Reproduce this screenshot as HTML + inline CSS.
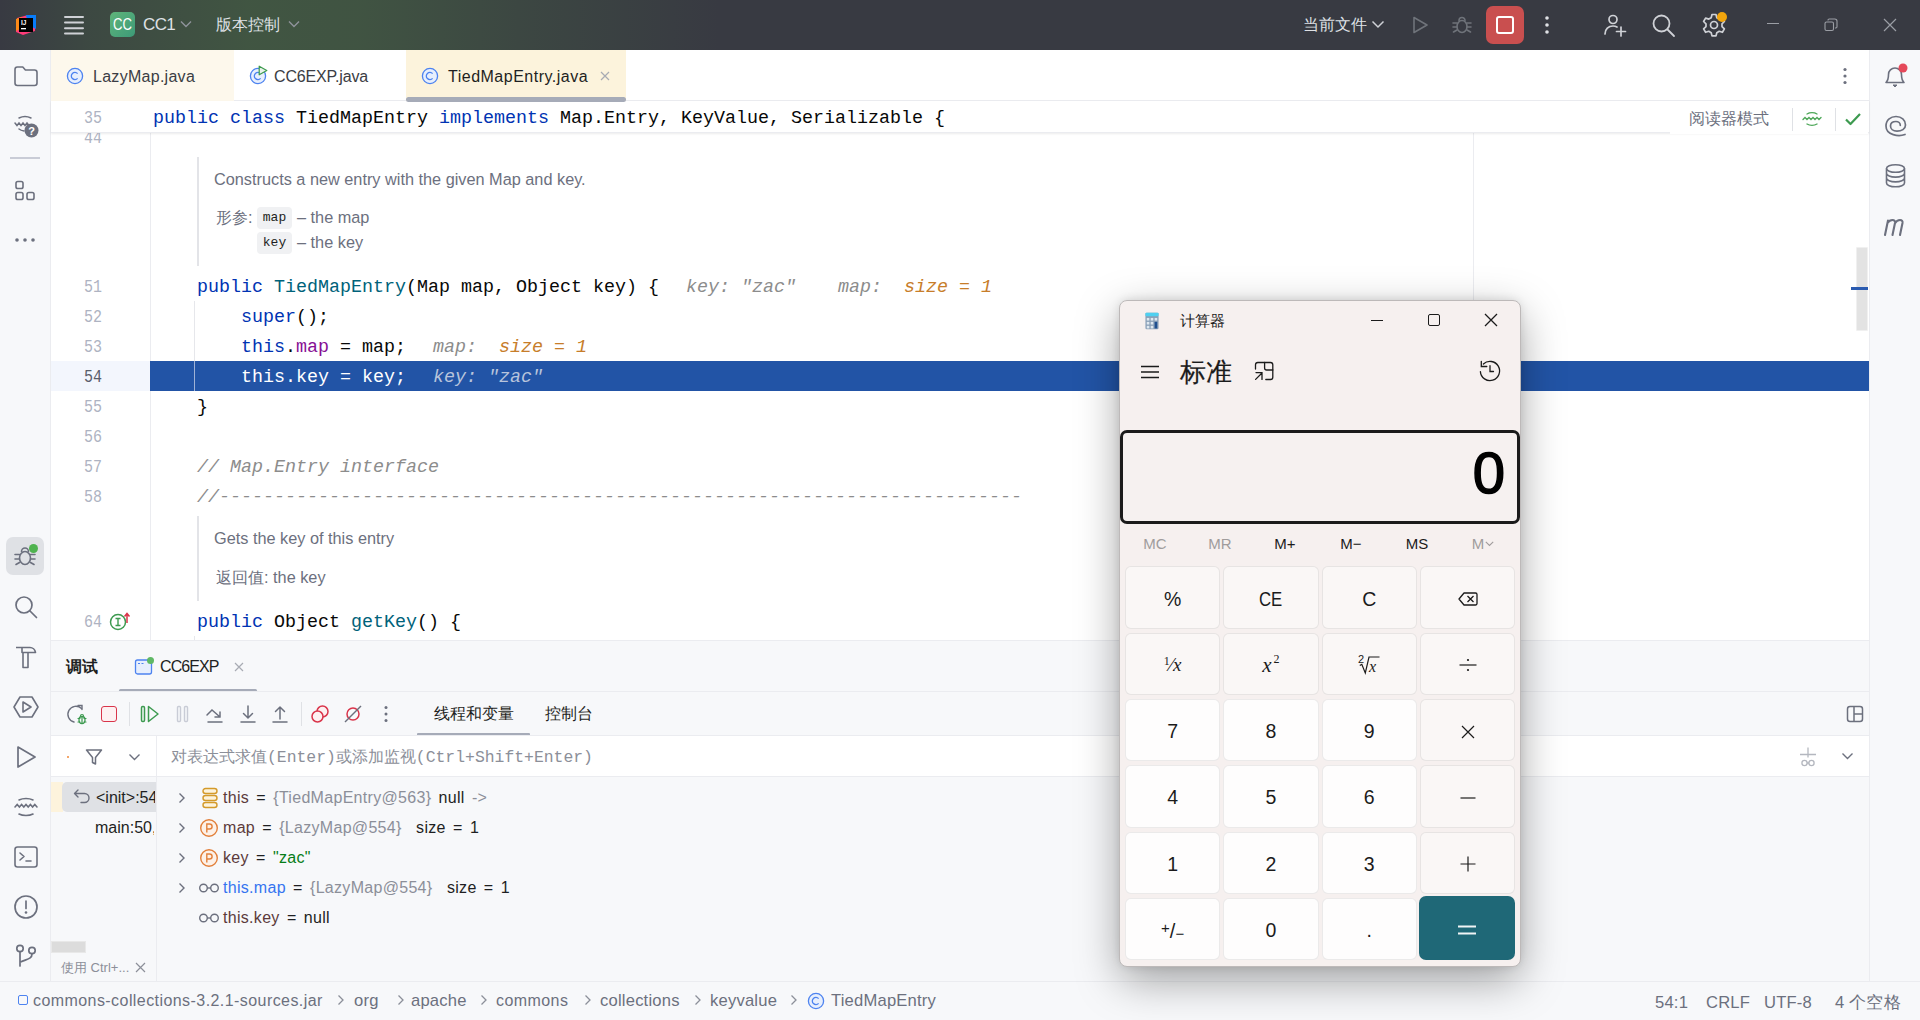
<!DOCTYPE html>
<html><head><meta charset="utf-8">
<style>
*{margin:0;padding:0;box-sizing:border-box}
html,body{width:1920px;height:1020px;overflow:hidden;background:#fff;font-family:"Liberation Sans",sans-serif;position:relative}
.a{position:absolute}
.mono{font-family:"Liberation Mono",monospace}
#title{left:0;top:0;width:1920px;height:50px;background:#383a42}
#titleglow{left:0;top:0;width:760px;height:50px;background:linear-gradient(90deg,rgba(66,90,66,0) 0px,rgba(66,90,66,0.45) 90px,rgba(66,90,66,0.85) 250px,rgba(66,90,66,0.8) 360px,rgba(66,90,66,0.4) 520px,rgba(66,90,66,0) 720px)}
#lstrip{left:0;top:50px;width:51px;height:931px;background:#f7f8fa;border-right:1px solid #ebecf0}
#rstrip{left:1869px;top:50px;width:51px;height:931px;background:#f7f8fa;border-left:1px solid #ebecf0}
#tabs{left:51px;top:50px;width:1818px;height:51px;background:#fff;border-bottom:1px solid #ebecf0}
#editor{left:51px;top:101px;width:1818px;height:539px;background:#fff;overflow:hidden}
#debug{left:51px;top:640px;width:1818px;height:341px;background:#f7f8fa;border-top:1px solid #ebecf0}
#status{left:0;top:981px;width:1920px;height:39px;background:#f7f8fa;border-top:1px solid #ebecf0}
</style></head><body>
<div id="title" class="a"></div>
<div id="titleglow" class="a"></div>

<!-- title bar content -->
<svg class="a" style="left:14px;top:13px" width="24" height="24" viewBox="0 0 24 24">
 <path d="M3 5 L14 2 L22 4 L21 18 L9 22 L2 19 Z" fill="#ff3b7a"/>
 <path d="M12 2 L22 2 L22 16 L14 12 Z" fill="#087cfa"/>
 <path d="M2 6 L8 4 L6 16 L2 18 Z" fill="#fd8b18"/>
 <rect x="5" y="5" width="14" height="14" fill="#000"/>
 <text x="7" y="12" font-size="6.5" font-weight="bold" fill="#fff" font-family="Liberation Sans">IJ</text>
 <rect x="7" y="15" width="5" height="1.3" fill="#fff"/>
</svg>
<svg class="a" style="left:63px;top:15px" width="22" height="20" viewBox="0 0 22 20"><g stroke="#cfd1d6" stroke-width="2" stroke-linecap="round"><path d="M2 2H20M2 7.6H20M2 13.2H20M2 18.6H20"/></g></svg>
<div class="a" style="left:110px;top:12px;width:25px;height:25px;border-radius:5px;background:linear-gradient(135deg,#5fb47a,#3d9a78);color:#fff;font-size:16px;line-height:25px;text-align:center;letter-spacing:0px"><span style="display:inline-block;transform:scaleX(0.82)">CC</span></div>
<div class="a" style="left:143px;top:14px;color:#dfe1e5;font-size:17px;line-height:22px;letter-spacing:-0.6px">CC1</div>
<svg class="a" style="left:180px;top:20px" width="12" height="8" viewBox="0 0 12 8"><path d="M1 1.5L6 6.5L11 1.5" stroke="#8f939b" stroke-width="1.4" fill="none"/></svg>
<div class="a" style="left:216px;top:14px;color:#dfe1e5;font-size:16px;line-height:22px">版本控制</div>
<svg class="a" style="left:288px;top:20px" width="12" height="8" viewBox="0 0 12 8"><path d="M1 1.5L6 6.5L11 1.5" stroke="#8f939b" stroke-width="1.4" fill="none"/></svg>

<div class="a" style="left:1303px;top:14px;color:#dfe1e5;font-size:16px;line-height:22px">当前文件</div>
<svg class="a" style="left:1371px;top:20px" width="14" height="9" viewBox="0 0 14 9"><path d="M1.5 1.5L7 7L12.5 1.5" stroke="#cfd1d6" stroke-width="1.5" fill="none"/></svg>
<svg class="a" style="left:1410px;top:15px" width="20" height="20" viewBox="0 0 20 20"><path d="M4 2.5L17 10L4 17.5Z" stroke="#6f737a" stroke-width="1.6" fill="none" stroke-linejoin="round"/></svg>
<svg class="a" style="left:1451px;top:14px" width="22" height="22" viewBox="0 0 22 22"><g stroke="#6f737a" stroke-width="1.6" fill="none" stroke-linecap="round"><ellipse cx="11" cy="12.5" rx="5" ry="6"/><path d="M8 6.5a3 3 0 0 1 6 0"/><path d="M2 9h4M16 9h4M2 13h4M16 13h4M2.5 18l3.5-2M19.5 18l-3.5-2"/></g></svg>
<div class="a" style="left:1486px;top:6px;width:38px;height:38px;border-radius:7px;background:#c94f4f"></div>
<div class="a" style="left:1496px;top:16px;width:18px;height:18px;border-radius:3px;border:2px solid #fff"></div>
<svg class="a" style="left:1543px;top:15px" width="8" height="20" viewBox="0 0 8 20"><g fill="#dfe1e5"><circle cx="4" cy="3" r="1.8"/><circle cx="4" cy="10" r="1.8"/><circle cx="4" cy="17" r="1.8"/></g></svg>
<svg class="a" style="left:1602px;top:12px" width="26" height="26" viewBox="0 0 26 26"><g stroke="#cfd1d6" stroke-width="1.7" fill="none" stroke-linecap="round"><circle cx="11" cy="7.5" r="4"/><path d="M3 22c0-5 3.5-8 8-8c1.5 0 2.8.3 4 1"/><path d="M19 15v9M14.5 19.5h9"/></g></svg>
<svg class="a" style="left:1651px;top:13px" width="26" height="26" viewBox="0 0 26 26"><g stroke="#cfd1d6" stroke-width="1.8" fill="none" stroke-linecap="round"><circle cx="10.5" cy="10.5" r="8"/><path d="M16.5 16.5L23 23"/></g></svg>
<svg class="a" style="left:1701px;top:12px" width="26" height="26" viewBox="0 0 26 26"><g stroke="#cfd1d6" stroke-width="1.7" fill="none" stroke-linejoin="round"><path d="M11 2.5h4l.8 3.2 2.4 1.4 3.2-1 2 3.4-2.4 2.3v2.8l2.4 2.3-2 3.4-3.2-1-2.4 1.4-.8 3.2h-4l-.8-3.2-2.4-1.4-3.2 1-2-3.4 2.4-2.3v-2.8L2.6 9.5l2-3.4 3.2 1 2.4-1.4z"/><circle cx="13" cy="13" r="3.5"/></g></svg>
<div class="a" style="left:1717px;top:12px;width:10px;height:10px;border-radius:50%;background:#f2a50c"></div>
<div class="a" style="left:1767px;top:23px;width:12px;height:1.3px;background:#9b9ea5"></div>
<svg class="a" style="left:1824px;top:18px" width="14" height="14" viewBox="0 0 14 14"><g stroke="#9b9ea5" stroke-width="1.1" fill="none"><rect x="1" y="4" width="8.5" height="8.5" rx="1.5"/><path d="M4 2.5V2.2c0-.7.5-1.2 1.2-1.2h5.6c1.2 0 2.2 1 2.2 2.2v5.6c0 .7-.5 1.2-1.2 1.2H11"/></g></svg>
<svg class="a" style="left:1883px;top:18px" width="14" height="14" viewBox="0 0 14 14"><path d="M1 1L13 13M13 1L1 13" stroke="#9b9ea5" stroke-width="1.2"/></svg>
<div id="lstrip" class="a"></div>
<div id="rstrip" class="a"></div>
<div id="tabs" class="a"></div>

<!-- tabs -->
<div class="a" style="left:51px;top:50px;width:183px;height:51px;background:#fdf8ec"></div>
<svg class="a" style="left:66px;top:67px" width="18" height="18" viewBox="0 0 18 18"><circle cx="9" cy="9" r="7.6" fill="#e7effd" stroke="#4d83f0" stroke-width="1.3"/><path d="M11.6 6.6A3.6 3.6 0 1 0 11.6 11.4" fill="none" stroke="#4d83f0" stroke-width="1.3"/></svg>
<div class="a" style="left:93px;top:66px;font-size:16px;line-height:22px;color:#3b3d44;letter-spacing:0.28px">LazyMap.java</div>
<svg class="a" style="left:249px;top:67px" width="18" height="18" viewBox="0 0 18 18"><circle cx="9" cy="9" r="7.6" fill="#e7effd" stroke="#4d83f0" stroke-width="1.3"/><path d="M11.6 6.6A3.6 3.6 0 1 0 11.6 11.4" fill="none" stroke="#4d83f0" stroke-width="1.3"/></svg>
<svg class="a" style="left:258px;top:65px" width="10" height="11" viewBox="0 0 10 11"><path d="M1.2 1.2L8.8 5.5L1.2 9.8Z" fill="#e8f2ea" stroke="#3b9a4d" stroke-width="1.2" stroke-linejoin="round"/></svg>
<div class="a" style="left:274px;top:66px;font-size:16px;line-height:22px;color:#3b3d44;letter-spacing:-0.15px">CC6EXP.java</div>
<div class="a" style="left:406px;top:50px;width:220px;height:51px;background:#fcf3dc"></div>
<div class="a" style="left:406px;top:97px;width:220px;height:5px;border-radius:3px;background:#a6abb8;z-index:5"></div>
<svg class="a" style="left:421px;top:67px" width="18" height="18" viewBox="0 0 18 18"><circle cx="9" cy="9" r="7.6" fill="#e7effd" stroke="#4d83f0" stroke-width="1.3"/><path d="M11.6 6.6A3.6 3.6 0 1 0 11.6 11.4" fill="none" stroke="#4d83f0" stroke-width="1.3"/></svg>
<div class="a" style="left:448px;top:66px;font-size:16px;line-height:22px;color:#1e1f22;letter-spacing:0.5px">TiedMapEntry.java</div>
<svg class="a" style="left:600px;top:71px" width="10" height="10" viewBox="0 0 10 10"><path d="M1 1L9 9M9 1L1 9" stroke="#a8abb3" stroke-width="1.2"/></svg>
<svg class="a" style="left:1841px;top:67px" width="8" height="18" viewBox="0 0 8 18"><g fill="#6c707e"><circle cx="4" cy="2.5" r="1.6"/><circle cx="4" cy="9" r="1.6"/><circle cx="4" cy="15.5" r="1.6"/></g></svg>
<div id="editor" class="a"></div>

<style>
.code{font-family:"Liberation Mono",monospace;font-size:18.33px;line-height:30px;white-space:pre;padding-top:2.4px}
.hint{font-style:italic}
.lnum{left:30px;width:72px;text-align:right;font-family:"Liberation Mono",monospace;font-size:18.5px;line-height:30px;padding-top:2px;transform:scaleX(0.81);transform-origin:100% 0}
.doc{font-size:16.3px;color:#6c707e;line-height:20px;white-space:pre}
.badge{background:#f0f1f3;border-radius:4px;font-family:"Liberation Mono",monospace;font-size:13px;color:#1e1f22;text-align:center;line-height:22px}
</style>
<!-- editor -->
<div class="a" style="left:150px;top:133px;width:1px;height:507px;background:#ebecf0"></div>
<div class="a" style="left:1473px;top:133px;width:1px;height:507px;background:#ebecf0"></div>
<div class="a" style="left:194px;top:301px;width:1px;height:90px;background:#e6e7eb"></div><div class="a" style="left:194px;top:636px;width:1px;height:4px;background:#e6e7eb"></div>
<div class="a lnum" style="top:122px;color:#aeb3c2">44</div><div class="a" style="left:197px;top:157px;width:2px;height:109px;background:#e3e4e8"></div><div class="a doc" style="left:214px;top:169px">Constructs a new entry with the given Map and key.</div><div class="a doc" style="left:216px;top:207px">形参:</div><div class="a badge" style="left:257px;top:207px;width:35px;height:22px">map</div><div class="a doc" style="left:297px;top:207px">– the map</div><div class="a badge" style="left:257px;top:232px;width:35px;height:22px">key</div><div class="a doc" style="left:297px;top:232px">– the key</div><div class="a lnum" style="top:271px;color:#aeb3c2">51</div><div class="a code" style="left:153px;top:271px;color:#080808;">    <span style="color:#0033b3">public</span> <span style="color:#00627a">TiedMapEntry</span>(Map map, Object key) {</div><div class="a code hint" style="left:686px;top:271px;color:#8c8c8c">key: "zac"</div><div class="a code hint" style="left:838px;top:271px;color:#8c8c8c">map:</div><div class="a code hint" style="left:904px;top:271px;color:#c77d2a">size = 1</div><div class="a lnum" style="top:301px;color:#aeb3c2">52</div><div class="a code" style="left:153px;top:301px;color:#080808;">        <span style="color:#0033b3">super</span>();</div><div class="a lnum" style="top:331px;color:#aeb3c2">53</div><div class="a code" style="left:153px;top:331px;color:#080808;">        <span style="color:#0033b3">this</span>.<span style="color:#871094">map</span> = map;</div><div class="a code hint" style="left:433px;top:331px;color:#8c8c8c">map:</div><div class="a code hint" style="left:499px;top:331px;color:#c77d2a">size = 1</div><div class="a" style="left:51px;top:361px;width:99px;height:30px;background:#f3f6fd"></div><div class="a" style="left:150px;top:361px;width:1719px;height:30px;background:#2254a6"></div><div class="a" style="left:194px;top:361px;width:1px;height:30px;background:#9fb2d6"></div><div class="a lnum" style="top:361px;color:#5a5d6b">54</div><div class="a code" style="left:153px;top:361px;color:#ffffff;">        this.key = key;</div><div class="a code hint" style="left:433px;top:361px;color:#b8c4dc">key: "zac"</div><div class="a lnum" style="top:391px;color:#aeb3c2">55</div><div class="a code" style="left:153px;top:391px;color:#080808;">    }</div><div class="a lnum" style="top:421px;color:#aeb3c2">56</div><div class="a lnum" style="top:451px;color:#aeb3c2">57</div><div class="a code" style="left:153px;top:451px;color:#8c8c8c;font-style:italic">    // Map.Entry interface</div><div class="a lnum" style="top:481px;color:#aeb3c2">58</div><div class="a code" style="left:153px;top:481px;color:#8c8c8c;font-style:italic">    //-------------------------------------------------------------------------</div><div class="a" style="left:197px;top:516px;width:2px;height:85px;background:#e3e4e8"></div><div class="a doc" style="left:214px;top:528px">Gets the key of this entry</div><div class="a doc" style="left:216px;top:567px">返回值: the key</div><div class="a lnum" style="top:606px;color:#aeb3c2">64</div><div class="a code" style="left:153px;top:606px;color:#080808;">    <span style="color:#0033b3">public</span> Object <span style="color:#00627a">getKey</span>() {</div><svg class="a" style="left:109px;top:611px" width="22" height="20" viewBox="0 0 22 20"><circle cx="9" cy="11" r="7.5" fill="none" stroke="#3d9a50" stroke-width="1.5"/><path d="M6.5 7.5h5M9 7.5v7M6.5 14.5h5" stroke="#3d9a50" stroke-width="1.4"/><path d="M18 12V3M15.5 5.5L18 2.5l2.5 3" stroke="#d9344a" stroke-width="1.5" fill="none"/></svg><div class="a" style="left:51px;top:101px;width:1818px;height:32px;background:#fff;box-shadow:0 1px 2px rgba(0,0,0,0.08);border-bottom:1px solid #ebecf0"></div><div class="a lnum" style="top:102px;color:#aeb3c2">35</div><div class="a code" style="left:153px;top:102px;color:#080808;"><span style="color:#0033b3">public</span> <span style="color:#0033b3">class</span> TiedMapEntry <span style="color:#0033b3">implements</span> Map.Entry, KeyValue, Serializable {</div><div class="a" style="left:1670px;top:104px;width:198px;height:30px;background:#fff"></div><div class="a" style="left:1689px;top:108px;font-size:16px;line-height:22px;color:#6c707e">阅读器模式</div><div class="a" style="left:1792px;top:108px;width:1px;height:23px;background:#dfe1e5"></div><svg class="a" style="left:1801px;top:108px" width="22" height="22" viewBox="0 0 22 22"><g fill="none" stroke="#4fa85a" stroke-width="1.4" stroke-linecap="round"><path d="M6 6a7 4 0 0 1 10 0"/><path d="M2 11.5l2-2 2 2 2-2 2 2 2-2 2 2 2-2 2 2 2-2"/><path d="M6 16a7 4 0 0 0 10 0"/></g></svg><div class="a" style="left:1835px;top:108px;width:1px;height:23px;background:#dfe1e5"></div><svg class="a" style="left:1844px;top:111px" width="18" height="16" viewBox="0 0 18 16"><path d="M2 8.5l4.5 4.5L16 3" fill="none" stroke="#3d9a50" stroke-width="2.2" stroke-linejoin="round"/></svg><div class="a" style="left:1856px;top:247px;width:12px;height:84px;background:#e3e3e3;border:1px solid #f0f0f0;border-radius:1px"></div><div class="a" style="left:1851px;top:287px;width:17px;height:3px;background:#2a5bb0"></div><div id="debug" class="a"></div>
<div id="status" class="a"></div>
<!-- debug panel -->
<div class="a" style="left:66px;top:656px;font-size:16px;line-height:22px;font-weight:bold;color:#1e1f22">调试</div>
<svg class="a" style="left:134px;top:656px" width="22" height="22" viewBox="0 0 22 22"><rect x="1.5" y="4" width="16" height="14" rx="2" fill="#e7effd" stroke="#4d83f0" stroke-width="1.3"/><path d="M4 7.5h2M7.5 7.5h2" stroke="#4d83f0" stroke-width="1"/><circle cx="16.5" cy="4.5" r="3.5" fill="#5fb865"/></svg>
<div class="a" style="left:160px;top:656px;font-size:16px;line-height:22px;color:#1e1f22;letter-spacing:-0.9px">CC6EXP</div>
<svg class="a" style="left:234px;top:662px" width="10" height="10" viewBox="0 0 10 10"><path d="M1 1L9 9M9 1L1 9" stroke="#a8abb3" stroke-width="1.2"/></svg>
<div class="a" style="left:119px;top:689px;width:138px;height:3px;border-radius:2px;background:#a6abb8"></div>
<div class="a" style="left:51px;top:691px;width:1818px;height:1px;background:#ebecf0"></div>
<!-- toolbar -->
<svg class="a" style="left:66px;top:704px" width="22" height="22" viewBox="0 0 22 22"><g fill="none" stroke-linecap="round"><path d="M15.5 4.5A8 8 0 1 0 8 18" stroke="#6c707e" stroke-width="1.4"/><path d="M12 1.5h4v4" stroke="#6c707e" stroke-width="1.4"/><ellipse cx="16" cy="16" rx="3" ry="3.5" stroke="#3d9a50" stroke-width="1.3"/><path d="M12 14.5h2M18 14.5h2M12 18h2M18 18h2M16 13v6M14.5 12a1.5 1.5 0 0 1 3 0" stroke="#3d9a50" stroke-width="1.2"/></g></svg>
<div class="a" style="left:101px;top:706px;width:16px;height:16px;border:1.6px solid #d9344a;border-radius:3px;background:#fdf0f1"></div>
<div class="a" style="left:129px;top:702px;width:1px;height:24px;background:#dfe1e5"></div>
<svg class="a" style="left:140px;top:705px" width="20" height="18" viewBox="0 0 20 18"><g fill="none" stroke="#3d9a50" stroke-width="1.5" stroke-linejoin="round"><rect x="1.5" y="1.5" width="3" height="15" rx="1.2"/><path d="M8.5 1.5L18 9L8.5 16.5Z"/></g></svg>
<svg class="a" style="left:176px;top:705px" width="14" height="18" viewBox="0 0 14 18"><g fill="none" stroke="#c9ccd6" stroke-width="1.4"><rect x="1.5" y="1.5" width="3" height="15" rx="1"/><rect x="8.5" y="1.5" width="3" height="15" rx="1"/></g></svg>
<svg class="a" style="left:205px;top:704px" width="20" height="20" viewBox="0 0 20 20"><g fill="none" stroke="#6c707e" stroke-width="1.5" stroke-linecap="round"><path d="M3 18h14"/><path d="M2 11L7 6L15 13M15 8v5h-5"/></g></svg>
<svg class="a" style="left:238px;top:704px" width="20" height="20" viewBox="0 0 20 20"><g fill="none" stroke="#6c707e" stroke-width="1.5" stroke-linecap="round"><path d="M3 18h14"/><path d="M10 2v12M5.5 9.5L10 14l4.5-4.5"/></g></svg>
<svg class="a" style="left:270px;top:704px" width="20" height="20" viewBox="0 0 20 20"><g fill="none" stroke="#6c707e" stroke-width="1.5" stroke-linecap="round"><path d="M3 18h14"/><path d="M10 15V3M5.5 7.5L10 3l4.5 4.5"/></g></svg>
<div class="a" style="left:301px;top:702px;width:1px;height:24px;background:#dfe1e5"></div>
<svg class="a" style="left:310px;top:704px" width="20" height="20" viewBox="0 0 20 20"><g fill="#fdf0f1" stroke="#d9344a" stroke-width="1.5"><circle cx="12.5" cy="7.5" r="5.5"/><circle cx="7.5" cy="12.5" r="5.5"/></g></svg>
<svg class="a" style="left:343px;top:704px" width="20" height="20" viewBox="0 0 20 20"><circle cx="10" cy="10" r="6" fill="none" stroke="#d9344a" stroke-width="1.5"/><path d="M2 18L18 2" stroke="#6c707e" stroke-width="1.5"/></svg>
<svg class="a" style="left:382px;top:705px" width="8" height="18" viewBox="0 0 8 18"><g fill="#6c707e"><circle cx="4" cy="2.5" r="1.5"/><circle cx="4" cy="9" r="1.5"/><circle cx="4" cy="15.5" r="1.5"/></g></svg>
<div class="a" style="left:434px;top:703px;font-size:16px;line-height:22px;color:#1e1f22">线程和变量</div>
<div class="a" style="left:545px;top:703px;font-size:16px;line-height:22px;color:#1e1f22">控制台</div>
<div class="a" style="left:417px;top:733px;width:113px;height:3px;border-radius:1px;background:#a6abb8"></div>
<svg class="a" style="left:1845px;top:704px" width="20" height="20" viewBox="0 0 20 20"><g fill="none" stroke="#6c707e" stroke-width="1.5"><rect x="2.5" y="2.5" width="15" height="15" rx="2.5"/><path d="M9 2.5v15M9 10h8.5"/></g></svg>
<div class="a" style="left:51px;top:735px;width:1818px;height:1px;background:#ebecf0"></div>
<!-- evaluate row -->
<div class="a" style="left:51px;top:736px;width:1818px;height:40px;background:#fff"></div>
<div class="a" style="left:67px;top:756px;width:2px;height:2px;border-radius:1px;background:#f08a3a"></div>
<svg class="a" style="left:84px;top:747px" width="20" height="20" viewBox="0 0 20 20"><path d="M2.5 3h15l-6 7.5V17l-3-1.5v-5z" fill="none" stroke="#6c707e" stroke-width="1.5" stroke-linejoin="round"/></svg>
<svg class="a" style="left:128px;top:753px" width="13" height="9" viewBox="0 0 13 9"><path d="M1.5 1.5L6.5 6.5L11.5 1.5" stroke="#6c707e" stroke-width="1.4" fill="none"/></svg>
<div class="a" style="left:156px;top:736px;width:1px;height:245px;background:#ebecf0"></div>
<div class="a" style="left:171px;top:746px;font-size:16px;line-height:22px;color:#8c8f99;white-space:pre">对表达式求值<span class="mono" style="font-size:16.4px">(Enter)</span>或添加监视<span class="mono" style="font-size:16.4px">(Ctrl+Shift+Enter)</span></div>
<svg class="a" style="left:1797px;top:746px" width="22" height="22" viewBox="0 0 22 22"><g fill="none" stroke="#b4b7bf" stroke-width="1.3"><path d="M11 1.5v10M3 8.5h16"/><circle cx="7.5" cy="17" r="2.6"/><circle cx="14.5" cy="17" r="2.6"/><path d="M10 17h2"/></g></svg>
<svg class="a" style="left:1841px;top:752px" width="13" height="9" viewBox="0 0 13 9"><path d="M1.5 1.5L6.5 6.5L11.5 1.5" stroke="#6c707e" stroke-width="1.4" fill="none"/></svg>
<div class="a" style="left:51px;top:776px;width:1818px;height:1px;background:#ebecf0"></div>
<!-- frames -->
<div class="a" style="left:51px;top:782px;width:12px;height:30px;background:#fdf3dc"></div>
<div class="a" style="left:62px;top:782px;width:94px;height:30px;background:#dfe1e5;border-radius:5px 0 0 5px"></div>
<svg class="a" style="left:73px;top:788px" width="18" height="16" viewBox="0 0 18 16"><path d="M5 2L1.5 5.5L5 9M1.5 5.5h10a4.5 4.5 0 0 1 0 9H8" fill="none" stroke="#6c707e" stroke-width="1.4" stroke-linecap="round" stroke-linejoin="round"/></svg>
<div class="a" style="left:96px;top:787px;width:59px;overflow:hidden;font-size:16px;line-height:22px;color:#1e1f22;white-space:pre">&lt;init&gt;:54, TiedMapEntry</div>
<div class="a" style="left:95px;top:817px;width:59px;overflow:hidden;font-size:16px;line-height:22px;color:#1e1f22;white-space:pre">main:50, CC6EXP</div>
<div class="a" style="left:51px;top:941px;width:35px;height:12px;background:#dcdcdc;border:1px solid #e8e8e8"></div>
<div class="a" style="left:61px;top:958px;font-size:13px;line-height:20px;color:#8c8f99;white-space:pre">使用 Ctrl+...</div>
<svg class="a" style="left:135px;top:962px" width="11" height="11" viewBox="0 0 11 11"><path d="M1 1L10 10M10 1L1 10" stroke="#8c8f99" stroke-width="1.2"/></svg>
<svg class="a" style="left:177px;top:792px" width="10" height="12" viewBox="0 0 10 12"><path d="M2.5 1.5L7 6L2.5 10.5" stroke="#6c707e" stroke-width="1.4" fill="none"/></svg><svg class="a" style="left:201px;top:787px" width="18" height="22" viewBox="0 0 18 22"><g fill="#fdf3dc" stroke="#d49a2a" stroke-width="1.4"><rect x="2" y="1.5" width="14" height="5" rx="2.5"/><rect x="2" y="8.5" width="14" height="5" rx="2.5"/><rect x="2" y="15.5" width="14" height="5" rx="2.5"/></g></svg><div class="a" style="left:223px;top:787px;font-size:16px;line-height:22px;white-space:pre;color:#1e1f22;letter-spacing:0.3px;word-spacing:2.5px"><span style="color:#5c3b3b">this</span> = <span style="color:#8c8f99">{TiedMapEntry@563}</span> null <span style="color:#8c8f99">-&gt;</span></div><svg class="a" style="left:177px;top:822px" width="10" height="12" viewBox="0 0 10 12"><path d="M2.5 1.5L7 6L2.5 10.5" stroke="#6c707e" stroke-width="1.4" fill="none"/></svg><svg class="a" style="left:199px;top:818px" width="20" height="20" viewBox="0 0 20 20"><circle cx="10" cy="10" r="8.3" fill="#fdf1e8" stroke="#e2803b" stroke-width="1.4"/><path d="M7.8 14.5V6h2.8a2.5 2.5 0 0 1 0 5H7.8" fill="none" stroke="#e2803b" stroke-width="1.4"/></svg><div class="a" style="left:223px;top:817px;font-size:16px;line-height:22px;white-space:pre;color:#1e1f22;letter-spacing:0.3px;word-spacing:2.5px"><span style="color:#5c3b3b">map</span> = <span style="color:#8c8f99">{LazyMap@554}</span>  size = 1</div><svg class="a" style="left:177px;top:852px" width="10" height="12" viewBox="0 0 10 12"><path d="M2.5 1.5L7 6L2.5 10.5" stroke="#6c707e" stroke-width="1.4" fill="none"/></svg><svg class="a" style="left:199px;top:848px" width="20" height="20" viewBox="0 0 20 20"><circle cx="10" cy="10" r="8.3" fill="#fdf1e8" stroke="#e2803b" stroke-width="1.4"/><path d="M7.8 14.5V6h2.8a2.5 2.5 0 0 1 0 5H7.8" fill="none" stroke="#e2803b" stroke-width="1.4"/></svg><div class="a" style="left:223px;top:847px;font-size:16px;line-height:22px;white-space:pre;color:#1e1f22;letter-spacing:0.3px;word-spacing:2.5px"><span style="color:#5c3b3b">key</span> = <span style="color:#067d17">"zac"</span></div><svg class="a" style="left:177px;top:882px" width="10" height="12" viewBox="0 0 10 12"><path d="M2.5 1.5L7 6L2.5 10.5" stroke="#6c707e" stroke-width="1.4" fill="none"/></svg><svg class="a" style="left:198px;top:882px" width="22" height="12" viewBox="0 0 22 12"><g fill="none" stroke="#6c707e" stroke-width="1.4"><circle cx="5.5" cy="6" r="3.8"/><circle cx="16.5" cy="6" r="3.8"/><path d="M9.3 6h3.4"/></g></svg><div class="a" style="left:223px;top:877px;font-size:16px;line-height:22px;white-space:pre;color:#1e1f22;letter-spacing:0.3px;word-spacing:2.5px"><span style="color:#3574f0">this.map</span> = <span style="color:#8c8f99">{LazyMap@554}</span>  size = 1</div><svg class="a" style="left:198px;top:912px" width="22" height="12" viewBox="0 0 22 12"><g fill="none" stroke="#6c707e" stroke-width="1.4"><circle cx="5.5" cy="6" r="3.8"/><circle cx="16.5" cy="6" r="3.8"/><path d="M9.3 6h3.4"/></g></svg><div class="a" style="left:223px;top:907px;font-size:16px;line-height:22px;white-space:pre;color:#1e1f22;letter-spacing:0.3px;word-spacing:2.5px"><span style="color:#5c3b3b">this.key</span> = null</div>
<!-- status bar -->
<div class="a" style="left:18px;top:995px;width:10px;height:10px;border:1.5px solid #4d83f0;border-radius:2px"></div>
<div class="a" style="left:33px;top:990px;font-size:16px;line-height:22px;color:#6c707e;white-space:pre;letter-spacing:0.43px">commons-collections-3.2.1-sources.jar</div>
<svg class="a" style="left:337px;top:994px" width="8" height="12" viewBox="0 0 8 12"><path d="M1.5 1.5L6 6L1.5 10.5" stroke="#8c8f99" stroke-width="1.3" fill="none"/></svg><svg class="a" style="left:397px;top:994px" width="8" height="12" viewBox="0 0 8 12"><path d="M1.5 1.5L6 6L1.5 10.5" stroke="#8c8f99" stroke-width="1.3" fill="none"/></svg><svg class="a" style="left:480px;top:994px" width="8" height="12" viewBox="0 0 8 12"><path d="M1.5 1.5L6 6L1.5 10.5" stroke="#8c8f99" stroke-width="1.3" fill="none"/></svg><svg class="a" style="left:584px;top:994px" width="8" height="12" viewBox="0 0 8 12"><path d="M1.5 1.5L6 6L1.5 10.5" stroke="#8c8f99" stroke-width="1.3" fill="none"/></svg><svg class="a" style="left:694px;top:994px" width="8" height="12" viewBox="0 0 8 12"><path d="M1.5 1.5L6 6L1.5 10.5" stroke="#8c8f99" stroke-width="1.3" fill="none"/></svg><svg class="a" style="left:790px;top:994px" width="8" height="12" viewBox="0 0 8 12"><path d="M1.5 1.5L6 6L1.5 10.5" stroke="#8c8f99" stroke-width="1.3" fill="none"/></svg><div class="a" style="left:354px;top:990px;font-size:16.6px;line-height:22px;color:#6c707e;white-space:pre;letter-spacing:0.2px">org</div><div class="a" style="left:411px;top:990px;font-size:16.6px;line-height:22px;color:#6c707e;white-space:pre;letter-spacing:0.2px">apache</div><div class="a" style="left:496px;top:990px;font-size:16px;line-height:22px;color:#6c707e;white-space:pre;letter-spacing:0.43px">commons</div><div class="a" style="left:600px;top:990px;font-size:16.6px;line-height:22px;color:#6c707e;white-space:pre;letter-spacing:0.2px">collections</div><div class="a" style="left:710px;top:990px;font-size:16.6px;line-height:22px;color:#6c707e;white-space:pre;letter-spacing:0.2px">keyvalue</div><svg class="a" style="left:807px;top:992px" width="18" height="18" viewBox="0 0 18 18"><circle cx="9" cy="9" r="7.6" fill="#e7effd" stroke="#4d83f0" stroke-width="1.3"/><path d="M11.6 6.6A3.6 3.6 0 1 0 11.6 11.4" fill="none" stroke="#4d83f0" stroke-width="1.3"/></svg><div class="a" style="left:831px;top:990px;font-size:16.6px;line-height:22px;color:#6c707e;white-space:pre;letter-spacing:0.2px">TiedMapEntry</div><div class="a" style="left:1655px;top:991.5px;font-size:16.6px;line-height:22px;color:#6c707e;white-space:pre;letter-spacing:0.2px">54:1</div><div class="a" style="left:1706px;top:991.5px;font-size:16.6px;line-height:22px;color:#6c707e;white-space:pre;letter-spacing:0.2px">CRLF</div><div class="a" style="left:1764px;top:991.5px;font-size:16.6px;line-height:22px;color:#6c707e;white-space:pre;letter-spacing:0.2px">UTF-8</div><div class="a" style="left:1835px;top:991.5px;font-size:16.6px;line-height:22px;color:#6c707e;white-space:pre;letter-spacing:0.2px">4 个空格</div>

<!-- left strip icons -->
<svg class="a" style="left:13px;top:64px" width="26" height="24" viewBox="0 0 26 24"><path d="M2 5.5c0-1.4 1-2.5 2.4-2.5h5.4l2.6 3h9.2c1.4 0 2.4 1 2.4 2.4V19c0 1.4-1 2.5-2.4 2.5H4.4C3 21.5 2 20.4 2 19z" fill="none" stroke="#6c707e" stroke-width="1.6" stroke-linejoin="round"/></svg>
<svg class="a" style="left:12px;top:112px" width="28" height="28" viewBox="0 0 28 28"><g fill="none" stroke="#6c707e" stroke-width="1.5" stroke-linecap="round"><path d="M7 6a9 5 0 0 1 12 0"/><path d="M3 11l2 2.5 2-2.5 2 2.5 2-2.5 2 2.5 2-2.5 2 2.5"/><path d="M7 17a9 5 0 0 0 5 2"/></g><circle cx="19.5" cy="18.5" r="7" fill="#6c707e"/><text x="19.5" y="23" font-size="11" font-weight="bold" text-anchor="middle" fill="#fff" font-family="Liberation Sans">?</text></svg>
<div class="a" style="left:10px;top:157px;width:30px;height:2px;background:#c9ccd6"></div>
<svg class="a" style="left:14px;top:180px" width="22" height="22" viewBox="0 0 22 22"><g fill="none" stroke="#6c707e" stroke-width="1.6"><rect x="2" y="1.5" width="7" height="7" rx="1.8"/><rect x="2" y="12.5" width="7" height="7" rx="1.8"/><rect x="13" y="12.5" width="7" height="7" rx="1.8"/></g></svg>
<svg class="a" style="left:14px;top:236px" width="24" height="8" viewBox="0 0 24 8"><g fill="#6c707e"><circle cx="3" cy="4" r="1.8"/><circle cx="11" cy="4" r="1.8"/><circle cx="19" cy="4" r="1.8"/></g></svg>
<div class="a" style="left:6px;top:537px;width:38px;height:38px;border-radius:7px;background:#dfe1e5"></div>
<svg class="a" style="left:12px;top:542px" width="28" height="28" viewBox="0 0 28 28"><g fill="none" stroke="#6c707e" stroke-width="1.6" stroke-linecap="round"><ellipse cx="13" cy="16" rx="5.5" ry="6.5"/><path d="M9.5 9.5a3.5 3.5 0 0 1 7 0"/><path d="M3 12.5h4.5M18.5 12.5H23M3 17h4.5M18.5 17H23M4 22.5l3.5-2M22 22.5l-3.5-2"/></g><circle cx="21.5" cy="6.5" r="4.5" fill="#4fb34f"/></svg>
<svg class="a" style="left:13px;top:594px" width="26" height="26" viewBox="0 0 26 26"><g stroke="#6c707e" stroke-width="1.7" fill="none" stroke-linecap="round"><circle cx="11" cy="11" r="8"/><path d="M17 17L23.5 23.5"/></g></svg>
<svg class="a" style="left:13px;top:644px" width="26" height="26" viewBox="0 0 26 26"><g stroke="#6c707e" stroke-width="1.6" fill="none" stroke-linejoin="round"><path d="M3 3.5h14c2.5 0 5 2 5.5 5H17v0H9v-5M9 8.5V8M10 8.5h5v15h-5z"/></g></svg>
<svg class="a" style="left:12px;top:693px" width="28" height="28" viewBox="0 0 28 28"><g stroke="#6c707e" stroke-width="1.6" fill="none" stroke-linejoin="round"><path d="M8 4h12l6 10-6 10H8L2 14z"/><path d="M11 9l8 5-8 5z"/></g></svg>
<svg class="a" style="left:13px;top:744px" width="26" height="26" viewBox="0 0 26 26"><path d="M5 3l17 10L5 23z" stroke="#6c707e" stroke-width="1.7" fill="none" stroke-linejoin="round"/></svg>
<svg class="a" style="left:12px;top:793px" width="28" height="28" viewBox="0 0 28 28"><g fill="none" stroke="#6c707e" stroke-width="1.6" stroke-linecap="round"><path d="M7 7a10 5 0 0 1 14 0"/><path d="M3 14l2.2-2.5 2.2 2.5 2.2-2.5 2.2 2.5 2.2-2.5 2.2 2.5 2.2-2.5 2.2 2.5 2.2-2.5 2.2 2.5"/><path d="M7 21a10 5 0 0 0 14 0"/></g></svg>
<svg class="a" style="left:13px;top:844px" width="26" height="26" viewBox="0 0 26 26"><g stroke="#6c707e" stroke-width="1.6" fill="none" stroke-linecap="round" stroke-linejoin="round"><rect x="2" y="3" width="22" height="20" rx="2.5"/><path d="M7 9l4 3.5-4 3.5M13 17h5"/></g></svg>
<svg class="a" style="left:13px;top:894px" width="26" height="26" viewBox="0 0 26 26"><g stroke="#6c707e" stroke-width="1.7" fill="none" stroke-linecap="round"><circle cx="13" cy="13" r="11"/><path d="M13 7v7.5"/></g><circle cx="13" cy="18.5" r="1.3" fill="#6c707e"/></svg>
<svg class="a" style="left:13px;top:943px" width="26" height="26" viewBox="0 0 26 26"><g stroke="#6c707e" stroke-width="1.7" fill="none" stroke-linecap="round"><circle cx="7" cy="5.5" r="3.2"/><circle cx="19" cy="7.5" r="3.2"/><path d="M7 9v14M19 11c0 5-5 5-11.5 8"/></g></svg>

<!-- right strip icons -->
<svg class="a" style="left:1882px;top:62px" width="28" height="28" viewBox="0 0 28 28"><g stroke="#6c707e" stroke-width="1.6" fill="none" stroke-linejoin="round"><path d="M4 20.5c2-2 2.5-3.5 2.5-8a6.5 6.5 0 0 1 13 0c0 4.5.5 6 2.5 8z"/></g><path d="M11 23h4l-2 2z" fill="#6c707e" stroke="#6c707e" stroke-width="1"/><circle cx="21" cy="6" r="4.5" fill="#e5495a"/></svg>
<svg class="a" style="left:1882px;top:112px" width="28" height="28" viewBox="0 0 28 28"><path d="M23 22.5C17 24.8 4 23.5 4 14C4 7.5 9 4.5 14 4.5C19.5 4.5 23.5 8 23.5 13C23.5 17 19.5 19.2 15 19.2C11 19.2 8.5 16.8 8.5 14C8.5 11 11 9.5 14 9.5C16.5 9.5 18.3 11.3 18.3 13.3" fill="none" stroke="#6c707e" stroke-width="1.7" stroke-linecap="round"/></svg>
<svg class="a" style="left:1882px;top:162px" width="28" height="28" viewBox="0 0 28 28"><g stroke="#6c707e" stroke-width="1.6" fill="none"><ellipse cx="13.5" cy="6.5" rx="9" ry="3.8"/><path d="M4.5 6.5v14.5c0 2.1 4 3.8 9 3.8s9-1.7 9-3.8V6.5M4.5 11.3c0 2.1 4 3.8 9 3.8s9-1.7 9-3.8M4.5 16.1c0 2.1 4 3.8 9 3.8s9-1.7 9-3.8"/></g></svg>
<svg class="a" style="left:1882px;top:214px" width="28" height="24" viewBox="0 0 28 24"><path d="M3 21L6 6.5M5.5 9C7 6.8 9 6 10.5 6C12.5 6 13.3 7.3 13 9L10.5 21M12.8 9.5C14.3 7 16.3 6 18 6C20 6 20.8 7.3 20.5 9L18 21" fill="none" stroke="#6c707e" stroke-width="2.1" stroke-linecap="round" stroke-linejoin="round"/></svg>

<!-- calculator -->
<style>
.cb{position:absolute;width:95.3px;height:62.5px;border-radius:6px;border:1px solid rgba(0,0,0,0.075);display:flex;align-items:center;justify-content:center;color:#1b1b1b;font-size:19.5px;padding-top:3px}
.op{background:#faf7f6}
.dg{background:#fefdfd}
.mem{position:absolute;top:533px;font-size:15px;line-height:22px;width:60px;text-align:center}
</style>
<div class="a" style="left:1120px;top:300px;width:400px;height:666px;border-radius:8px;box-shadow:0 14px 44px rgba(0,0,0,0.36),0 0 10px rgba(0,0,0,0.12)"></div>
<div class="a" style="left:1119px;top:300px;width:402px;height:667px;border-radius:8px;background:#f6f0ef;border:1px solid #bdb9b9"></div>
<svg class="a" style="left:1145px;top:312px" width="14" height="18" viewBox="0 0 16 20"><rect x="0.5" y="0.5" width="15" height="19" rx="1.5" fill="#8aa0b8"/><rect x="0.5" y="0.5" width="15" height="4" rx="1" fill="#4fd0f0"/><g fill="#dfe8f0"><rect x="2" y="6.5" width="3" height="3"/><rect x="6.5" y="6.5" width="3" height="3"/><rect x="11" y="6.5" width="3" height="3"/><rect x="2" y="11" width="3" height="3"/><rect x="6.5" y="11" width="3" height="3"/><rect x="2" y="15.5" width="3" height="3"/><rect x="6.5" y="15.5" width="3" height="3"/></g><rect x="11" y="11" width="3" height="7.5" fill="#1f4f8f"/></svg>
<div class="a" style="left:1180px;top:311px;font-size:15px;line-height:20px;color:#1b1b1b">计算器</div>
<div class="a" style="left:1371px;top:320px;width:12px;height:1.3px;background:#1b1b1b"></div>
<div class="a" style="left:1428px;top:314px;width:12px;height:12px;border:1.3px solid #1b1b1b;border-radius:2px"></div>
<svg class="a" style="left:1484px;top:313px" width="14" height="14" viewBox="0 0 14 14"><path d="M1 1L13 13M13 1L1 13" stroke="#1b1b1b" stroke-width="1.3"/></svg>
<svg class="a" style="left:1140px;top:364px" width="20" height="16" viewBox="0 0 20 16"><path d="M1 2.5H19M1 8H19M1 13.5H19" stroke="#1b1b1b" stroke-width="1.4"/></svg>
<div class="a" style="left:1180px;top:356px;font-size:26px;line-height:32px;color:#1b1b1b;-webkit-text-stroke:0.2px #1b1b1b">标准</div>
<svg class="a" style="left:1253px;top:360px" width="22" height="22" viewBox="0 0 22 22"><g fill="none" stroke="#1b1b1b" stroke-width="1.3" stroke-linecap="round"><path d="M2.5 9V4.8Q2.5 2.5 4.8 2.5H17.5Q19.8 2.5 19.8 4.8V17.2Q19.8 19.5 17.5 19.5H12.8"/><path d="M11.6 2.5V8Q11.6 10 13.6 10H19.8"/><path d="M2.6 19.4L9 13M3 12.6H9V19.4"/></g></svg>
<svg class="a" style="left:1478px;top:359px" width="24" height="24" viewBox="0 0 24 24"><g fill="none" stroke="#1b1b1b" stroke-width="1.3" stroke-linecap="round"><path d="M2.4 12.6A9.6 9.6 0 1 0 5.4 5"/><path d="M3.3 2.3V7.5H8.8"/><path d="M12 6.7V12.5H15.5"/></g></svg>
<div class="a" style="left:1120px;top:430px;width:400px;height:94px;border:3px solid #1b1b1b;border-radius:7px;background:#f6f1f0"></div>
<div class="a" style="left:1300px;top:434.5px;width:205px;text-align:right;font-size:58px;line-height:76px;color:#000;-webkit-text-stroke:1.5px #000">0</div>
<div class="mem" style="left:1125px;color:#a09c9c">MC</div>
<div class="mem" style="left:1190px;color:#a09c9c">MR</div>
<div class="mem" style="left:1255px;color:#1b1b1b">M+</div>
<div class="mem" style="left:1321px;color:#1b1b1b">M−</div>
<div class="mem" style="left:1387px;color:#1b1b1b">MS</div>
<div class="mem" style="left:1453px;color:#a09c9c">M<svg width="9" height="6" viewBox="0 0 9 6" style="margin-left:1px;vertical-align:2px"><path d="M0.8 0.8L4.5 4.5L8.2 0.8" fill="none" stroke="#a09c9c" stroke-width="1.1"/></svg></div>
<div class="cb op" style="left:1125px;top:566.3px">%</div>
<div class="cb op" style="left:1223.3px;top:566.3px"><span style="transform:scaleX(0.86);display:inline-block">CE</span></div>
<div class="cb op" style="left:1321.6px;top:566.3px">C</div>
<div class="cb op" style="left:1419.9px;top:566.3px"><svg width="20" height="16" viewBox="0 0 20 16"><path d="M6 2h11.5a1.5 1.5 0 0 1 1.5 1.5v9a1.5 1.5 0 0 1-1.5 1.5H6L1 8z" fill="none" stroke="#1b1b1b" stroke-width="1.3" stroke-linejoin="round"/><path d="M9.5 5l6 6M15.5 5l-6 6" stroke="#1b1b1b" stroke-width="1.3"/></svg></div>
<div class="cb op" style="left:1125px;top:632.6px"><span style="font-family:'Liberation Serif',serif;font-size:19px"><sup style="font-size:12px;vertical-align:6px">1</sup>⁄<i>x</i></span></div>
<div class="cb op" style="left:1223.3px;top:632.6px"><span style="font-family:'Liberation Serif',serif;font-size:21px"><i>x</i><sup style="font-size:12px;vertical-align:9px;margin-left:2px">2</sup></span></div>
<div class="cb op" style="left:1321.6px;top:632.6px"><svg width="28" height="24" viewBox="0 0 28 24" style="margin-top:-3px"><text x="3" y="11" font-size="11" font-family="Liberation Sans" fill="#1b1b1b">2</text><path d="M4.8 13.5L6.8 12.3L10.3 21L14 5H24.5" fill="none" stroke="#1b1b1b" stroke-width="1.2" stroke-linejoin="miter"/><text x="14" y="19.5" font-size="16" font-style="italic" font-family="Liberation Serif" fill="#1b1b1b">x</text></svg></div>
<div class="cb op" style="left:1419.9px;top:632.6px"><svg width="18" height="16" viewBox="0 0 18 16"><path d="M0.5 8H17.5" stroke="#1b1b1b" stroke-width="1.2"/><circle cx="9" cy="3" r="1.1" fill="#1b1b1b"/><circle cx="9" cy="13" r="1.1" fill="#1b1b1b"/></svg></div>
<div class="cb dg" style="left:1125px;top:698.9px">7</div>
<div class="cb dg" style="left:1223.3px;top:698.9px">8</div>
<div class="cb dg" style="left:1321.6px;top:698.9px">9</div>
<div class="cb op" style="left:1419.9px;top:698.9px"><svg width="14" height="14" viewBox="0 0 14 14"><path d="M1 1L13 13M13 1L1 13" stroke="#1b1b1b" stroke-width="1.2"/></svg></div>
<div class="cb dg" style="left:1125px;top:765.2px">4</div>
<div class="cb dg" style="left:1223.3px;top:765.2px">5</div>
<div class="cb dg" style="left:1321.6px;top:765.2px">6</div>
<div class="cb op" style="left:1419.9px;top:765.2px"><svg width="16" height="4" viewBox="0 0 16 4"><path d="M0.5 2H15.5" stroke="#1b1b1b" stroke-width="1.2"/></svg></div>
<div class="cb dg" style="left:1125px;top:831.5px">1</div>
<div class="cb dg" style="left:1223.3px;top:831.5px">2</div>
<div class="cb dg" style="left:1321.6px;top:831.5px">3</div>
<div class="cb op" style="left:1419.9px;top:831.5px"><svg width="16" height="16" viewBox="0 0 16 16"><path d="M0.5 8H15.5M8 0.5V15.5" stroke="#1b1b1b" stroke-width="1.2"/></svg></div>
<div class="cb dg" style="left:1125px;top:897.8px"><span style="font-size:20px"><sup style="font-size:15px;vertical-align:5px">+</sup>/<sub style="font-size:15px;vertical-align:-1px">−</sub></span></div>
<div class="cb dg" style="left:1223.3px;top:897.8px">0</div>
<div class="cb dg" style="left:1321.6px;top:897.8px">.</div>
<div class="cb eq" style="left:1419.3px;top:896.3px;width:95.7px;height:63.7px;background:#1f6877;border:none;border-radius:7px"><svg width="18" height="10" viewBox="0 0 18 10"><path d="M0 1.5H18M0 8.5H18" stroke="#f0f4f5" stroke-width="2"/></svg></div>
</body></html>
